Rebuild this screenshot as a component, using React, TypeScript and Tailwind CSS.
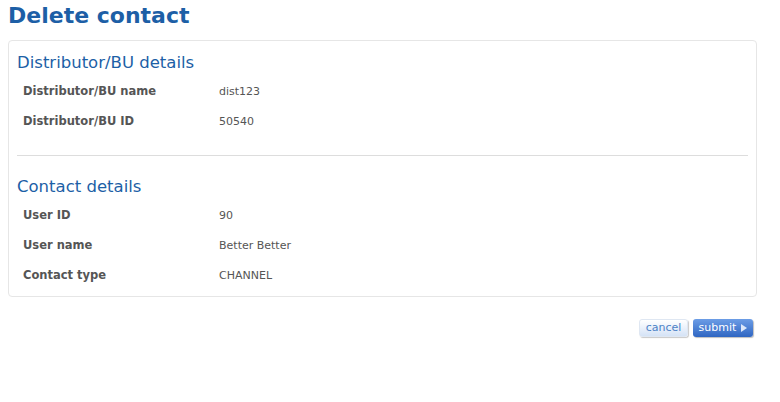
import { ReactNode } from 'react';

const font = { fontFamily: '"DejaVu Sans", Verdana, sans-serif' };

function Row({ label, value }: { label: string; value: string }) {
  return (
    <div className="flex h-[30px] items-center">
      <div className="w-[202px] pl-[6px] text-[11.5px] font-bold text-[#555555]">{label}</div>
      <div className="text-[11px] text-[#555555]">{value}</div>
    </div>
  );
}

function Section({ title, children }: { title: string; children: ReactNode }) {
  return (
    <div>
      <h2 className="text-[16.5px] leading-[20px] text-[#1d5fa6]">{title}</h2>
      <div className="mt-[4px]">{children}</div>
    </div>
  );
}

export default function App() {
  return (
    <div className="h-[402px] w-[780px] overflow-hidden bg-white" style={font}>
      <div className="pl-[8px] pr-[23px]">
        <h1 className="pt-[2px] text-[22px] font-bold leading-[28px] text-[#1d5fa6]">Delete contact</h1>
        <div className="mt-[10px] rounded-[4px] border border-[#e6e6e6] px-[8px] pt-[12px] pb-[5px]">
          <Section title="Distributor/BU details">
            <Row label="Distributor/BU name" value="dist123" />
            <Row label="Distributor/BU ID" value="50540" />
          </Section>
          <div className="mt-[18px] mb-[21px] h-px bg-[#dddddd]" />
          <Section title="Contact details">
            <Row label="User ID" value="90" />
            <Row label="User name" value="Better Better" />
            <Row label="Contact type" value="CHANNEL" />
          </Section>
        </div>
        <div className="mt-[22px] flex justify-end gap-[5px] pr-[4px]">
          <button className="h-[18px] w-[49px] rounded-[3px] border border-[#dfe7f2] bg-gradient-to-b from-white to-[#d5e3f6] text-[11px] leading-[16px] text-[#4d82c6] shadow-[1px_1px_1px_#c8c8c8]">
            cancel
          </button>
          <button className="flex h-[18px] w-[60px] items-center justify-center gap-[5px] rounded-[3px] bg-gradient-to-b from-[#6c9de6] to-[#2f66c2] text-[11px] leading-[16px] text-white shadow-[1px_1px_1px_#bfbfbf]">
            submit
            <svg width="6" height="8" viewBox="0 0 6 8">
              <path d="M0 0 L6 4 L0 8 Z" fill="#dce8fa" />
            </svg>
          </button>
        </div>
      </div>
    </div>
  );
}
